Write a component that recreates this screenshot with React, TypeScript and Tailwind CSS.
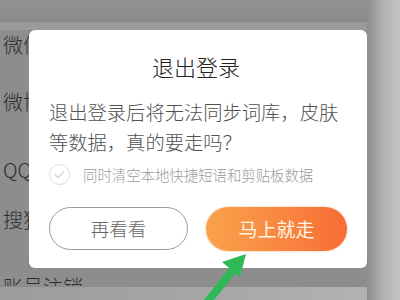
import React from "react";

const font = { fontFamily: '"Noto Sans CJK SC", "Noto Sans", sans-serif' };

export default function App() {
  return (
    <div
      className="relative w-[400px] h-[300px] overflow-hidden bg-[#8d8d8d]"
      style={font}
    >
      {/* top band */}
      <div className="h-[22px] bg-gradient-to-b from-[#939393] to-[#8a8a8a]" />
      <div className="h-[8px] bg-[#9a9a9a]" />
      {/* background list */}
      <div className="flex flex-col pl-[3px] text-[20px] leading-[20px] text-[#2e2e2e] font-light">
        <div className="mt-[5px]">微信</div>
        <div className="mt-[37px]">微博</div>
        <div className="mt-[48px]">QQ</div>
        <div className="mt-[30px]">搜狗</div>
        <div className="mt-[47px] h-[9px] overflow-hidden">账号注销</div>
      </div>
      <div className="absolute left-0 right-0 bottom-0 h-[13px] bg-gradient-to-r from-[#9c9c9c] via-[#a6a6a6] to-[#b5b5b5]" />
      <div className="absolute top-0 bottom-0 right-0 w-[33px] bg-gradient-to-r from-[#8c8c8c] via-[#b3b3b3] to-[#c4c4c4]" />

      {/* dialog */}
      <div className="absolute left-[29px] top-[30px] w-[338px] h-[238px] rounded-[6px] bg-white flex flex-col">
        <div className="mt-[21px] text-center text-[22px] leading-[30px] text-[#222] pr-[4px] font-light">
          退出登录
        </div>
        <div className="mt-[16px] px-[20px] text-[19.3px] leading-[30px] text-[#505050] font-light">
          退出登录后将无法同步词库，皮肤等数据，真的要走吗？
        </div>
        <div className="mt-[7px] flex items-center px-[20px]">
          <div className="w-[21px] h-[21px] rounded-full border border-[#dcdcdc] flex items-center justify-center">
            <svg width="11" height="9" viewBox="0 0 11 9">
              <path d="M1 4.5 L4 7.5 L10 1.5" fill="none" stroke="#d5d5d5" strokeWidth="1.4" />
            </svg>
          </div>
          <div className="ml-[13px] text-[14.4px] leading-[20px] text-[#9a9a9a] font-light">
            同时清空本地快捷短语和剪贴板数据
          </div>
        </div>
        <div className="mt-[22px] flex px-[20px] gap-[18px]">
          <div className="w-[142px] h-[43px] rounded-full border border-[#9a9a9a] flex items-center justify-center text-[18.5px] text-[#666] font-light">
            再看看
          </div>
          <div className="w-[144px] h-[44px] rounded-full bg-gradient-to-r from-[#f9a24c] to-[#f76d36] flex items-center justify-center text-[19px] text-[#fff6e6] shadow-[0_0_2px_#f5b070]">
            马上就走
          </div>
        </div>
      </div>

      {/* green arrow */}
      <svg className="absolute left-0 top-0" width="400" height="300" viewBox="0 0 400 300">
        <line x1="205" y1="305" x2="236" y2="266" stroke="#2fb856" strokeWidth="8" />
        <polygon points="246,254 222,262 240,277" fill="#2fb856" />
      </svg>
    </div>
  );
}
